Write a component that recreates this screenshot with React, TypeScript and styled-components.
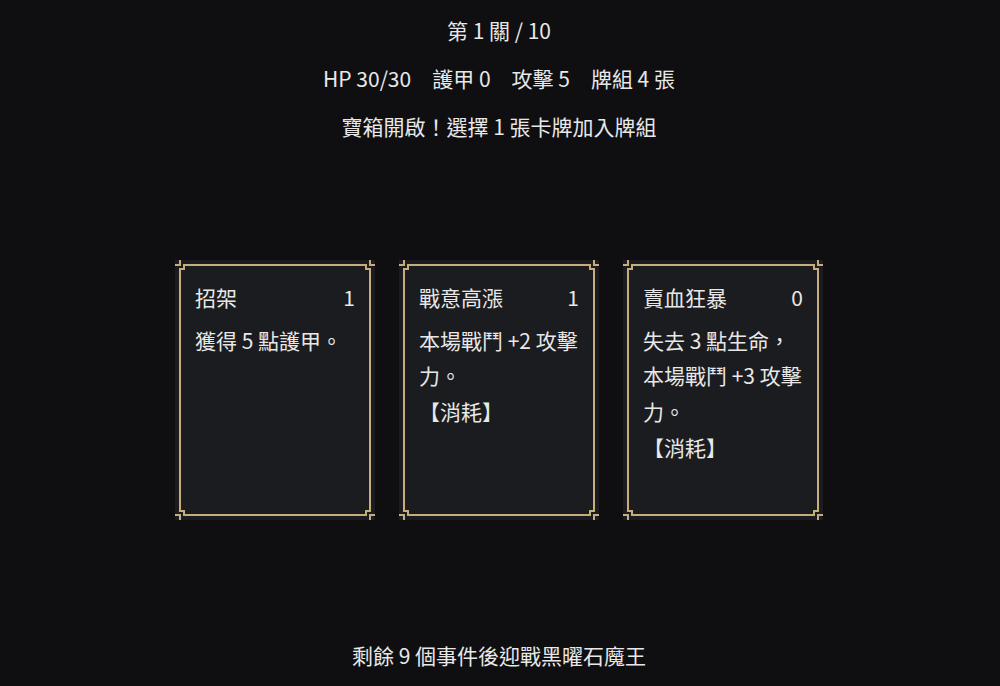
import React from "react";
import styled, { createGlobalStyle } from "styled-components";

const GOLD = "#c6ad7b";
const CARD_BG = "#1b1c1f";

const Global = createGlobalStyle`
  html, body {
    margin: 0;
    padding: 0;
    background: #0f0f12;
  }
  * { box-sizing: border-box; }
`;

const Page = styled.div`
  min-height: 686px;
  display: flex;
  flex-direction: column;
  align-items: center;
  padding: 6px 2px 0 0;
  color: #e8e8e8;
  font-family: "Noto Sans CJK TC", "Noto Sans", sans-serif;
  font-size: 21px;
`;

const HeaderLine = styled.div`
  line-height: 48px;
  text-align: center;
  white-space: nowrap;
`;

const Stats = styled.div`
  display: flex;
  gap: 21px;
  line-height: 48px;
  white-space: nowrap;
`;

const CardRow = styled.div`
  display: flex;
  gap: 24px;
  margin-top: 110px;
`;

const Card = styled.div`
  position: relative;
  width: 200px;
  height: 260px;
  padding: 4px;
  background: ${CARD_BG};
`;

const Frame = styled.div`
  height: 100%;
  border: 2px solid ${GOLD};
  padding: 14px 14px 0 14px;
  line-height: 1.7;
`;

const TitleRow = styled.div`
  display: flex;
  justify-content: space-between;
  margin-bottom: 7px;
`;

const Desc = styled.div`
  word-break: break-all;
`;

type Pos = "tl" | "tr" | "bl" | "br";

const CornerSvg = styled.svg<{ $pos: Pos }>`
  position: absolute;
  width: 12px;
  height: 12px;
  ${({ $pos }) => ($pos[0] === "t" ? "top: 0;" : "bottom: 0;")}
  ${({ $pos }) => ($pos[1] === "l" ? "left: 0;" : "right: 0;")}
  transform: scale(${({ $pos }) => ($pos[1] === "l" ? 1 : -1)}, ${({ $pos }) =>
    $pos[0] === "t" ? 1 : -1});
`;

const Corner = ({ pos }: { pos: Pos }) => (
  <CornerSvg $pos={pos} viewBox="0 0 12 12" shapeRendering="crispEdges">
    <g fill={CARD_BG}>
      <rect x="4" y="6" width="2" height="2" />
      <rect x="6" y="4" width="2" height="2" />
    </g>
    <g fill={GOLD}>
      <rect x="0" y="4" width="6" height="2" />
      <rect x="4" y="0" width="2" height="6" />
      <rect x="4" y="8" width="6" height="2" />
      <rect x="8" y="4" width="2" height="6" />
    </g>
  </CornerSvg>
);

const Footer = styled.div`
  margin-top: 111px;
  line-height: 48px;
  text-align: center;
`;

type CardData = { name: string; cost: number; lines: string[] };

const cards: CardData[] = [
  { name: "招架", cost: 1, lines: ["獲得 5 點護甲。"] },
  { name: "戰意高漲", cost: 1, lines: ["本場戰鬥 +2 攻擊力。", "【消耗】"] },
  { name: "賣血狂暴", cost: 0, lines: ["失去 3 點生命，本場戰鬥 +3 攻擊力。", "【消耗】"] },
];

export default function App() {
  return (
    <>
      <Global />
      <Page>
        <HeaderLine>第 1 關 / 10</HeaderLine>
        <Stats>
          <span>HP 30/30</span>
          <span>護甲 0</span>
          <span>攻擊 5</span>
          <span>牌組 4 張</span>
        </Stats>
        <HeaderLine>寶箱開啟！選擇 1 張卡牌加入牌組</HeaderLine>
        <CardRow>
          {cards.map((c) => (
            <Card key={c.name}>
              <Frame>
                <TitleRow>
                  <span>{c.name}</span>
                  <span>{c.cost}</span>
                </TitleRow>
                {c.lines.map((l) => (
                  <Desc key={l}>{l}</Desc>
                ))}
              </Frame>
              <Corner pos="tl" />
              <Corner pos="tr" />
              <Corner pos="bl" />
              <Corner pos="br" />
            </Card>
          ))}
        </CardRow>
        <Footer>剩餘 9 個事件後迎戰黑曜石魔王</Footer>
      </Page>
    </>
  );
}
